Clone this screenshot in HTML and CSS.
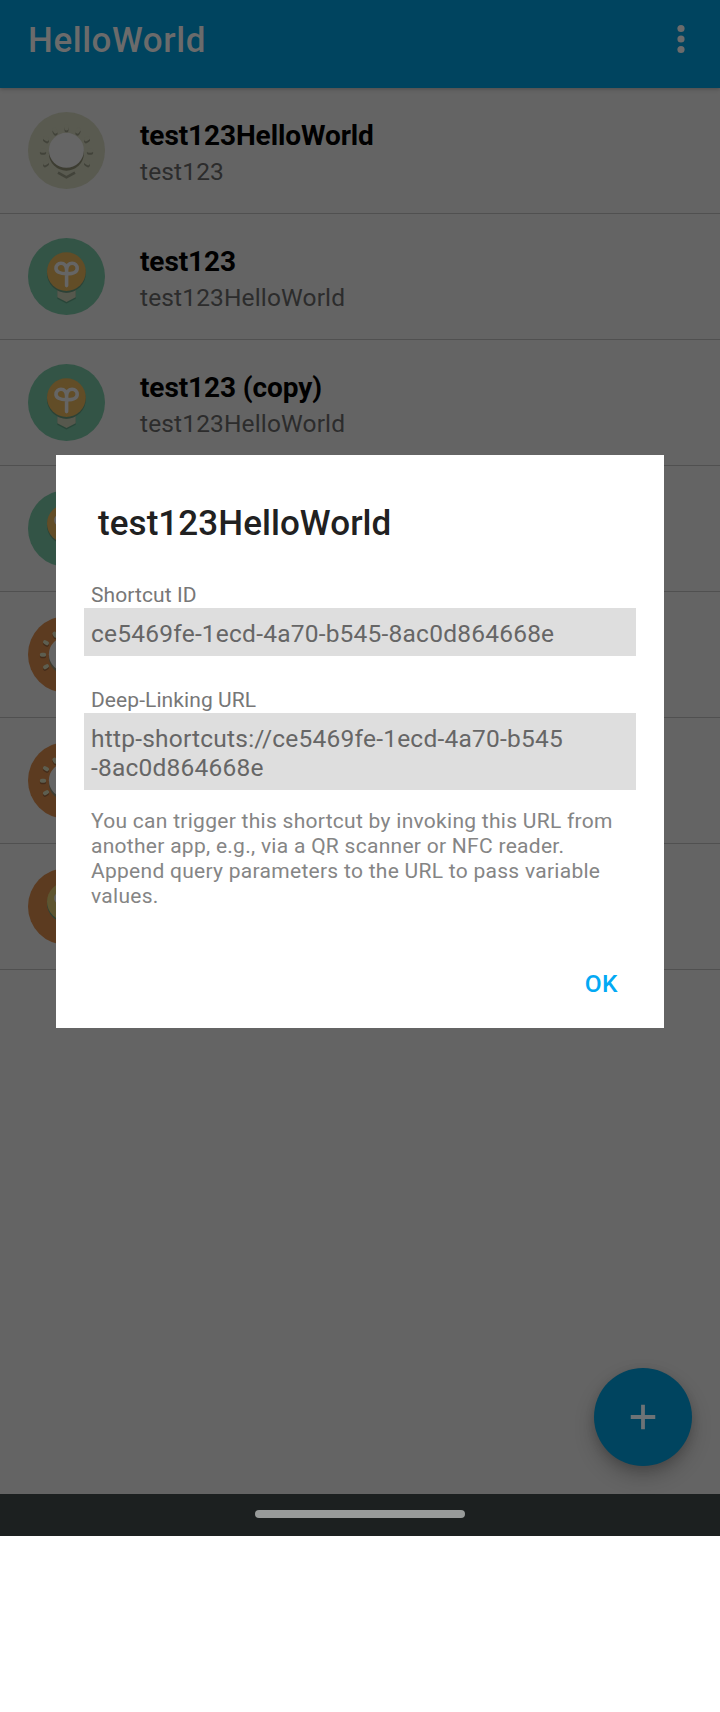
FILE: index.html
```
<!DOCTYPE html>
<html lang="en">
<head>
<meta charset="utf-8">
<title>HelloWorld</title>
<link rel="stylesheet" href="styles.css">
</head>
<body>
<svg class="defs" width="0" height="0" aria-hidden="true">
  <defs>
    <g id="rays" fill="none" stroke-width="4" stroke-linecap="round">
      <path d="M38.5 14.4v2M26.4 17.6l1.2 2M50.6 17.6l-1.2 2M17 26.1l2 1.2M60 26.1l-2 1.2M13.8 38.7h2.4M63.2 38.7h-2.4M17 51.3l2-1.2M60 51.3l-2-1.2"/>
    </g>
    <path id="base" d="M29.3 48h18.4v11.3l-9.2 4.6-9.2-4.6z"/>
    <g id="bulb">
      <use href="#base" y="1.5" fill="#294639"/>
      <use href="#base" fill="#56584d"/>
      <path d="M29.3 50q9.2 6 18.4 0v2q-9.2 6-18.4 0z" fill="#454a40"/>
      <circle cx="38.4" cy="35.4" r="19.4" fill="#2c4236"/>
      <circle class="glass" cx="38.4" cy="33.6" r="19.4"/>
      <path d="M38.6 47.6V32C38.8 27.500 41 25.200 44.300 25.200a4.900 4.900 0 0 1 4.900 5c0 3.200-3.600 5.600-10.600 5.600s-10.600-2.400-10.600-5.600a4.900 4.900 0 0 1 4.900-5c3.300 0 5.500 2.300 5.700 6.800" fill="none" stroke="#656565" stroke-width="3.6" stroke-linecap="round"/>
    </g>
    <g id="sun-body">
      <circle cx="38.4" cy="41.2" r="17.5" fill="#3d3d32"/>
      <circle cx="38.4" cy="38.3" r="17.5" fill="#656565"/>
    </g>
  </defs>
</svg>
<div class="phone">
  <header class="bar">
    <h1 class="bar-title">HelloWorld</h1>
    <svg class="more" width="8" height="30" viewBox="0 0 8 30"><circle cx="4" cy="4.5" r="3.6"/><circle cx="4" cy="15" r="3.6"/><circle cx="4" cy="25.5" r="3.6"/></svg>
  </header>
  <ul class="list">
    <li class="row">
      <svg class="icon" viewBox="0 0 77 77"><circle cx="38.5" cy="38.5" r="38.5" fill="#595a50"/><use href="#rays" y="2" stroke="#42433a"/><use href="#rays" stroke="#595a50"/><path d="M30 60.7l8.4 4.6 8.6-4.6" fill="none" stroke="#42433a" stroke-width="2.6"/><use href="#sun-body"/></svg>
      <div class="texts"><div class="name">test123HelloWorld</div><div class="desc">test123</div></div>
    </li>
    <li class="row">
      <svg class="icon gold" viewBox="0 0 77 77"><circle cx="38.5" cy="38.5" r="38.5" fill="#335446"/><use href="#bulb"/></svg>
      <div class="texts"><div class="name">test123</div><div class="desc">test123HelloWorld</div></div>
    </li>
    <li class="row">
      <svg class="icon gold" viewBox="0 0 77 77"><circle cx="38.5" cy="38.5" r="38.5" fill="#335446"/><use href="#bulb"/></svg>
      <div class="texts"><div class="name">test123 (copy)</div><div class="desc">test123HelloWorld</div></div>
    </li>
    <li class="row">
      <svg class="icon gold" viewBox="0 0 77 77"><circle cx="38.5" cy="38.5" r="38.5" fill="#335446"/><use href="#bulb"/></svg>
    </li>
    <li class="row">
      <svg class="icon" viewBox="0 0 77 77"><circle cx="38.5" cy="38.5" r="38.5" fill="#5c3b20"/><use href="#rays" y="1.5" stroke="#432b19"/><use href="#rays" stroke="#5d5e50"/><use href="#sun-body"/></svg>
    </li>
    <li class="row">
      <svg class="icon" viewBox="0 0 77 77"><circle cx="38.5" cy="38.5" r="38.5" fill="#5c3b20"/><use href="#rays" y="1.5" stroke="#432b19"/><use href="#rays" stroke="#5d5e50"/><use href="#sun-body"/></svg>
    </li>
    <li class="row">
      <svg class="icon olive" viewBox="0 0 77 77"><circle cx="38.5" cy="38.5" r="38.5" fill="#5c3b20"/><use href="#bulb"/></svg>
    </li>
  </ul>
  <button class="fab" aria-label="Add"><svg width="26" height="26" viewBox="0 0 26 26"><path d="M13 .75v24.5M.75 13h24.5" stroke="#6d7376" stroke-width="3.8"/></svg></button>
  <div class="nav"><div class="pill"></div></div>
  <section class="dialog" role="dialog">
    <h2 class="dialog-title">test123HelloWorld</h2>
    <div class="label">Shortcut ID</div>
    <div class="value">ce5469fe-1ecd-4a70-b545-8ac0d864668e</div>
    <div class="label second">Deep-Linking URL</div>
    <div class="value url">http-shortcuts://ce5469fe-1ecd-4a70-b545<br>-8ac0d864668e</div>
    <p class="help">You can trigger this shortcut by invoking this URL from<br>another app, e.g., via a QR scanner or NFC reader.<br>Append query parameters to the URL to pass variable<br>values.</p>
    <div class="actions"><button class="ok">OK</button></div>
  </section>
</div>
</body>
</html>
```
FILE: styles.css
```
* { box-sizing: border-box; }
body { margin: 0; background: #fff; font-family: Roboto, "Liberation Sans", sans-serif; }
button { border: 0; padding: 0; font-family: inherit; }
.defs { position: absolute; }
.phone { position: relative; display: flex; flex-direction: column; width: 720px; height: 1536px; background: #646464; }
.bar { display: flex; align-items: flex-start; justify-content: space-between; height: 88px; padding: 24px 35px 0 28px; background: #00445f; box-shadow: 0 1px 4px rgba(0, 0, 0, .25); color: #6b6b6b; }
.bar-title { margin: -4px 0 0; font-size: 35px; line-height: 42px; font-weight: 500; letter-spacing: .55px; }
.more { fill: #6b6b6b; }
.list { flex: 1; margin: 0; padding: 0; list-style: none; }
.row { display: flex; align-items: flex-start; gap: 35px; height: 126px; padding: 24px 28px 0; border-bottom: 1px solid #505050; }
.icon { flex: none; width: 77px; height: 77px; }
.gold { fill: #624d27; }
.olive { fill: #5e5530; }
.texts { padding-top: 6px; }
.name { font-size: 28px; line-height: 36px; font-weight: 700; letter-spacing: -.1px; color: #000; }
.desc { font-size: 24.5px; line-height: 36px; letter-spacing: .14px; color: #2c2c2c; }
.fab { position: absolute; right: 28px; bottom: 70px; display: flex; align-items: center; justify-content: center; width: 98px; height: 98px; border-radius: 50%; background: #00445f; box-shadow: 0 10px 20px rgba(0, 0, 0, .22), 0 3px 10px rgba(0, 0, 0, .12); }
.nav { display: flex; align-items: flex-start; justify-content: center; height: 42px; padding-top: 16px; background: #1c2020; }
.pill { width: 210px; height: 8px; border-radius: 4px; background: #989b9a; }
.dialog { position: absolute; left: 56px; top: 455px; width: 608px; height: 573px; padding: 48px 28px 0; background: #fff; }
.dialog-title { margin: 0 0 38px; padding-left: 14px; font-size: 35px; line-height: 42px; font-weight: 500; letter-spacing: .07px; color: #212121; }
.label { height: 25px; padding-left: 7px; font-size: 21px; line-height: 25px; letter-spacing: .08px; color: #777; }
.second { margin-top: 32px; }
.value { height: 48px; padding: 11px 7px 0; background: #dedede; font-size: 24.5px; line-height: 29px; letter-spacing: .22px; color: #666; white-space: nowrap; }
.url { height: 77px; }
.help { margin: 19px 0 0; padding-left: 7px; font-size: 21px; line-height: 25px; letter-spacing: .28px; color: #858585; white-space: nowrap; }
.actions { display: flex; justify-content: flex-end; padding: 60px 18px 0 0; }
.ok { background: none; font-size: 24.5px; line-height: 30px; font-weight: 500; letter-spacing: .4px; color: #03a9f4; }
```
